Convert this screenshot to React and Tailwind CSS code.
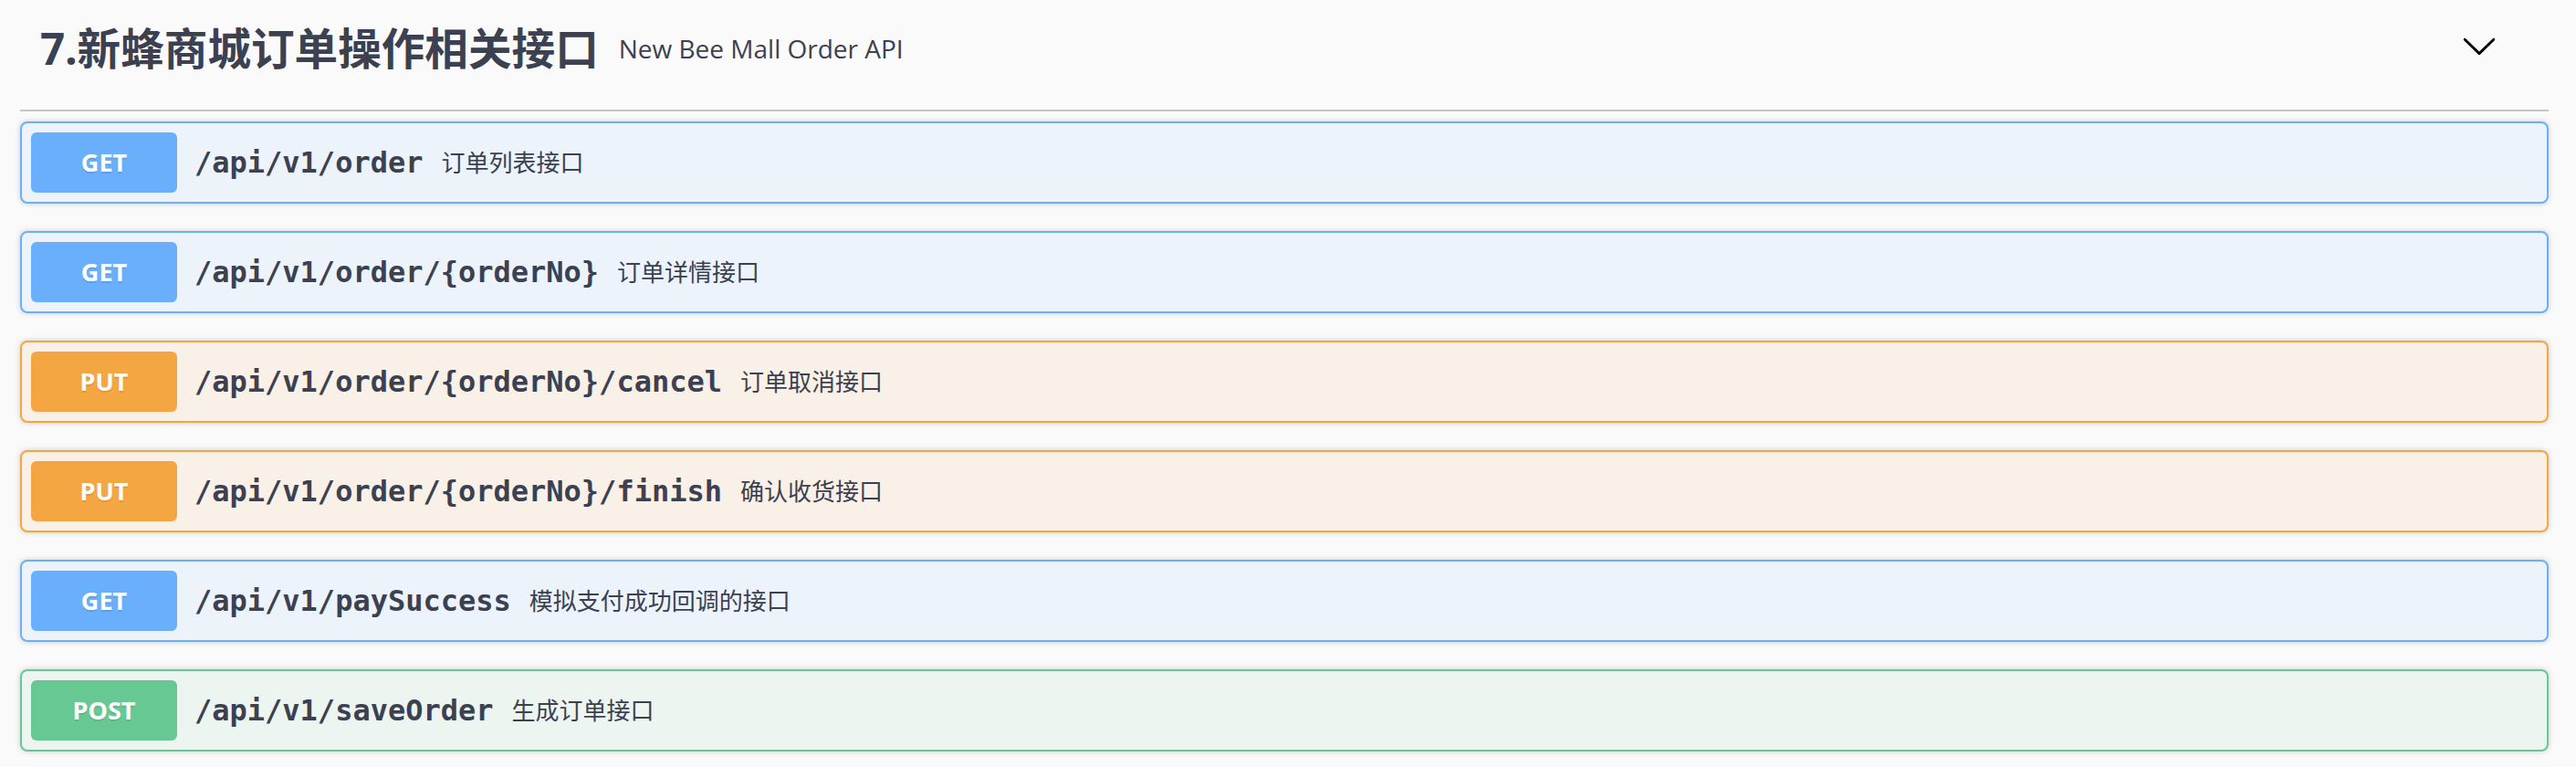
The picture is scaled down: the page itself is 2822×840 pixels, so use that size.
const ops = [
  { method: 'GET', path: '/api/v1/order', desc: '订单列表接口' },
  { method: 'GET', path: '/api/v1/order/{orderNo}', desc: '订单详情接口' },
  { method: 'PUT', path: '/api/v1/order/{orderNo}/cancel', desc: '订单取消接口' },
  { method: 'PUT', path: '/api/v1/order/{orderNo}/finish', desc: '确认收货接口' },
  { method: 'GET', path: '/api/v1/paySuccess', desc: '模拟支付成功回调的接口' },
  { method: 'POST', path: '/api/v1/saveOrder', desc: '生成订单接口' },
];

// colours per http method
const styles = {
  GET: { box: 'bg-[#ecf3fb] border-[#6aaffc]', badge: 'bg-[#6aaffc]' },
  PUT: { box: 'bg-[#f9f0e7] border-[#f3a642]', badge: 'bg-[#f3a642]' },
  POST: { box: 'bg-[#edf5f0] border-[#68c894]', badge: 'bg-[#68c894]' },
};

function Chevron() {
  return (
    <svg width="40" height="40" viewBox="0 0 20 20" className="mb-[7px] shrink-0">
      <path
        fill="#000"
        d="M17.418 6.109c.272-.268.709-.268.979 0s.271.701 0 .969l-7.908 7.83c-.27.268-.707.268-.979 0l-7.908-7.83c-.27-.268-.27-.701 0-.969.271-.268.709-.268.979 0L10 13.25l7.418-7.141z"
      />
    </svg>
  );
}

function OpBlock({ op }) {
  const s = styles[op.method];
  return (
    <div className={`flex items-center rounded-[8px] border-2 p-[10px] shadow-[0_0_6px_rgba(0,0,0,0.19)] ${s.box}`}>
      <span
        className={`flex h-[66px] w-[160px] shrink-0 items-center justify-center rounded-[6px] text-[27px] font-bold text-white [text-shadow:0_2px_0_rgba(0,0,0,0.1)] ${s.badge}`}
        style={{ fontFamily: '"Open Sans", sans-serif' }}
      >
        {op.method}
      </span>
      <span
        className="pl-[19px] pr-[20px] text-[32px] font-bold text-[#3b4151]"
        style={{ fontFamily: '"DejaVu Sans Mono", monospace' }}
      >
        {op.path}
      </span>
      <span
        className="text-[26px] text-[#3b4151]"
        style={{ fontFamily: '"Noto Sans", "Noto Sans CJK SC", sans-serif' }}
      >
        {op.desc}
      </span>
    </div>
  );
}

export default function App() {
  return (
    <div className="min-h-screen bg-[#fafafa] pl-[22px] pr-[30px]">
      {/* Tag header */}
      <div className="flex h-[122px] items-center border-b-2 border-[#c3c5ca] pb-[14px] pl-[22px] pr-[56px]">
        <h3
          className="text-[47.6px] font-bold text-[#3b4151]"
          style={{ fontFamily: '"Noto Sans", "Noto Sans CJK SC", sans-serif' }}
        >
          7.新蜂商城订单操作相关接口
        </h3>
        <small
          className="flex-1 pl-[22px] text-[28px] text-[#3b4151]"
          style={{ fontFamily: '"Open Sans", sans-serif' }}
        >
          New Bee Mall Order API
        </small>
        <Chevron />
      </div>

      {/* Operations */}
      <div className="mt-[11px] flex flex-col gap-[30px]">
        {ops.map((op, i) => (
          <OpBlock key={i} op={op} />
        ))}
      </div>
    </div>
  );
}
